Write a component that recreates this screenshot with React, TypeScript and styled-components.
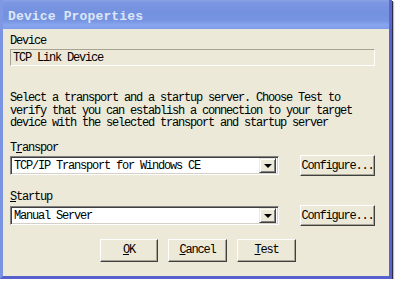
import React from "react";
import styled, { createGlobalStyle } from "styled-components";

const Global = createGlobalStyle`
  html, body { margin: 0; padding: 0; background: #ffffff; }
  body { font-family: "Liberation Mono", monospace; }
`;

const Frame = styled.div`
  width: 392px;
  height: 279px;
  box-sizing: border-box;
  display: flex;
  flex-direction: column;
  box-shadow: 1px 1px 0 #2c2c44, 2px 2px 1px rgba(0, 0, 0, 0.25);
`;

const TitleBar = styled.div`
  height: 29px;
  flex: none;
  box-sizing: border-box;
  padding: 3px 0 0 8px;
  display: flex;
  align-items: center;
  background: linear-gradient(
    to bottom,
    #8aa2e6 0px,
    #7c96e2 3px,
    #7291df 14px,
    #7795e3 21px,
    #88a6ee 25px,
    #83a1ec 28px,
    #7a96e2 29px
  );
  border-right: 3px solid #5a66cf;
  border-left: 3px solid #7e98e4;
`;

const Title = styled.span`
  font-family: "Liberation Mono", monospace;
  font-weight: bold;
  font-size: 13px;
  letter-spacing: 0.15px;
  color: #dce6f8;
  margin-left: -3px;
`;

const Body = styled.div`
  flex: 1;
  display: flex;
  flex-direction: column;
  background: #ece9d8;
  border-left: 3px solid #7b94e2;
  border-right: 3px solid #5863cc;
  border-bottom: 3px solid #5761cb;
  padding: 6px 14px 0 7px;
`;

const Text = styled.div<{ $mt?: number }>`
  font-family: "Liberation Mono", monospace;
  font-size: 12px;
  letter-spacing: -1.2px;
  line-height: 12px;
  color: #000;
  white-space: pre;
  margin-top: ${(p) => p.$mt ?? 0}px;
`;

const Para = styled(Text)`
  line-height: 12.5px;
`;

const Mn = styled.span`
  text-decoration: underline;
  text-underline-offset: 1px;
`;

const ReadOnlyBox = styled.div`
  margin-top: 2px;
  height: 17px;
  box-sizing: border-box;
  border-top: 1px solid #a7a493;
  border-left: 1px solid #a7a493;
  border-right: 1px solid #ffffff;
  border-bottom: 1px solid #ffffff;
  padding-left: 2px;
  display: flex;
  align-items: center;
  font-family: "Liberation Mono", monospace;
  font-size: 12px;
  letter-spacing: -1.2px;
  color: #000;
`;

const Row = styled.div<{ $mt?: number }>`
  display: flex;
  align-items: center;
  justify-content: space-between;
  height: 22px;
  margin-top: ${(p) => p.$mt ?? 0}px;
`;

const Combo = styled.div`
  width: 269px;
  height: 19px;
  box-sizing: border-box;
  background: #ffffff;
  border-top: 1px solid #808080;
  border-left: 1px solid #808080;
  border-right: 1px solid #ffffff;
  border-bottom: 1px solid #ffffff;
  box-shadow: inset 1px 1px 0 #404040, inset -1px -1px 0 #d4d0c8;
  display: flex;
  align-items: center;
  padding: 2px;
`;

const ComboText = styled.span`
  flex: 1;
  padding-left: 1px;
  font-family: "Liberation Mono", monospace;
  font-size: 12px;
  letter-spacing: -1.2px;
  color: #000;
  white-space: pre;
  overflow: hidden;
`;

const ArrowBtn = styled.div`
  width: 17px;
  height: 15px;
  box-sizing: border-box;
  background: #ece9d8;
  border-top: 1px solid #ece9d8;
  border-left: 1px solid #ece9d8;
  border-right: 1px solid #404040;
  border-bottom: 1px solid #404040;
  box-shadow: inset 1px 1px 0 #ffffff, inset -1px -1px 0 #808080;
  display: flex;
  align-items: center;
  justify-content: center;
`;

const Tri = styled.div`
  width: 0;
  height: 0;
  border-left: 4px solid transparent;
  border-right: 4px solid transparent;
  border-top: 4px solid #000;
  margin-top: 1px;
`;

const Button = styled.div<{ $w: number; $h: number }>`
  width: ${(p) => p.$w}px;
  height: ${(p) => p.$h}px;
  box-sizing: border-box;
  background: #ece9d8;
  border-top: 1px solid #ffffff;
  border-left: 1px solid #ffffff;
  border-right: 1px solid #404040;
  border-bottom: 1px solid #404040;
  box-shadow: inset -1px -1px 0 #a8a595;
  display: flex;
  align-items: center;
  justify-content: center;
  overflow: hidden;
  font-family: "Liberation Mono", monospace;
  font-size: 12px;
  letter-spacing: -1.2px;
  color: #000;
  white-space: pre;
`;

const ButtonRow = styled.div`
  display: flex;
  gap: 10px;
  padding-left: 90px;
  margin-top: 12px;
`;

function ComboBox({ value }: { value: string }) {
  return (
    <Combo>
      <ComboText>{value}</ComboText>
      <ArrowBtn>
        <Tri />
      </ArrowBtn>
    </Combo>
  );
}

export default function App() {
  return (
    <>
      <Global />
      <Frame>
        <TitleBar>
          <Title>Device Properties</Title>
        </TitleBar>
        <Body>
          <Text>Device</Text>
          <ReadOnlyBox>TCP Link Device</ReadOnlyBox>
          <Para $mt={26}>
            {"Select a transport and a startup server. Choose Test to\nverify that you can establish a connection to your target\ndevice with the selected transport and startup server"}
          </Para>
          <Text $mt={12}>
            T<Mn>r</Mn>anspor
          </Text>
          <Row $mt={1}>
            <ComboBox value="TCP/IP Transport for Windows CE" />
            <Button $w={75} $h={21}>Configure...</Button>
          </Row>
          <Text $mt={14}>
            <Mn>S</Mn>tartup
          </Text>
          <Row $mt={2}>
            <ComboBox value="Manual Server" />
            <Button $w={75} $h={21}>Configure...</Button>
          </Row>
          <ButtonRow>
            <Button $w={58} $h={23}>
              <Mn>O</Mn>K
            </Button>
            <Button $w={59} $h={23}>
              <Mn>C</Mn>ancel
            </Button>
            <Button $w={59} $h={23}>
              <Mn>T</Mn>est
            </Button>
          </ButtonRow>
        </Body>
      </Frame>
    </>
  );
}
